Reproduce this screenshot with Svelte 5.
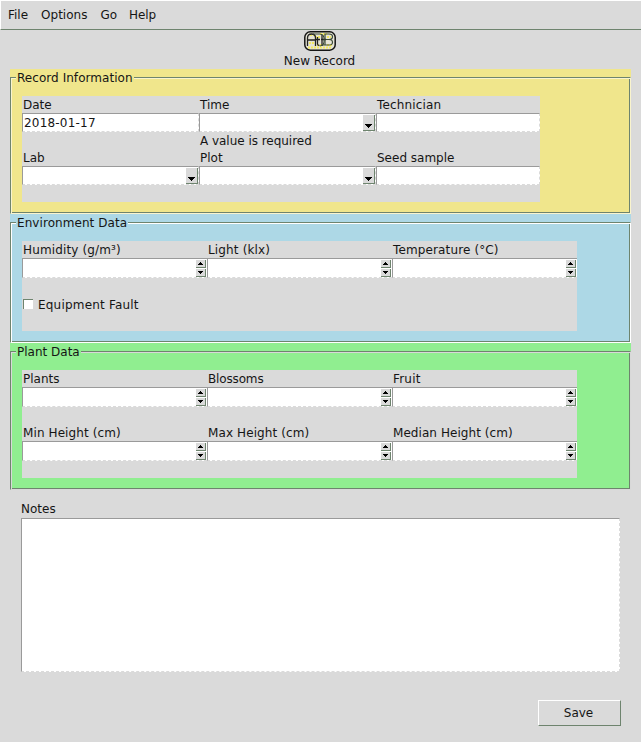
<script>
  const sections = [
    { title: 'Record Information', tone: 'yellow', track: 0.05, rows: [
      [{ label: 'Date', value: '2018-01-17' }, { label: 'Time', kind: 'combo', error: 'A value is required' }, { label: 'Technician', track: 0.15 }],
      [{ label: 'Lab', kind: 'combo' }, { label: 'Plot', kind: 'combo' }, { label: 'Seed sample' }]
    ] },
    { title: 'Environment Data', tone: 'blue', track: 0.07, rows: [
      [{ label: 'Humidity (g/m³)', kind: 'spin', track: 0.14 }, { label: 'Light (klx)', kind: 'spin', track: 0.15 }, { label: 'Temperature (°C)', kind: 'spin', track: 0.13 }]
    ], check: 'Equipment Fault' },
    { title: 'Plant Data', tone: 'green', track: 0, rows: [
      [{ label: 'Plants', kind: 'spin' }, { label: 'Blossoms', kind: 'spin', track: -0.15 }, { label: 'Fruit', kind: 'spin', track: 0.2 }],
      [{ label: 'Min Height (cm)', kind: 'spin', track: 0.1 }, { label: 'Max Height (cm)', kind: 'spin', track: 0.1 }, { label: 'Median Height (cm)', kind: 'spin', track: 0.06 }]
    ] }
  ];
</script>

<div class="window">
  <nav>
    <span>File</span><span>Options</span><span>Go</span><span class="help">Help</span>
  </nav>
  <header>
    <svg class="logo" width="34" height="22" viewBox="0 0 34 22">
      <rect x="1.8" y="1.8" width="30.4" height="18.4" rx="5.5" fill="#e6e4d6" stroke="#151515" stroke-width="1.5" />
      <path d="M5 17.5h24M7 5h6M17 4h7M6 13h6M14 15h6M24 15h5M12 7h5M24 7h4" stroke="#f5ea60" stroke-width="2" stroke-dasharray="2 1" />
      <g fill="none" stroke="#222" stroke-width="1.3">
        <path d="M4.5 16V8q0-4 4-4q4 0 4 4v8M5 10h7" />
        <path d="M14.5 7v7q0 1.5 2 1.5M12 9.5h5M19 5v11M18 9.5h5" />
      </g>
      <path d="M10 4h7q4 0 4 4v4q0 4-4 4" fill="none" stroke="#3c4a38" stroke-width="1" />
      <path d="M22 15V4h4q3.5 0 3.5 2.7t-3.5 2.8h-3h3q3.5 0 3.5 2.8t-3.5 2.7h-7" fill="none" stroke="#3c4a38" stroke-width="1.2" />
    </svg>
    <div>New Record</div>
  </header>
  <main>
    {#each sections as s}
      <section class={s.tone}>
        <div class="frame">
          <h2 style:letter-spacing="{s.track}px">{s.title}</h2>
          <div class="panel">
            {#each s.rows as row}
              <div class="row">
                {#each row as f}
                  <div class="field">
                    <div class="label" style:letter-spacing="{f.track ?? 0}px">{f.label}</div>
                    <div class="entry">
                      <span>{f.value ?? ''}</span>
                      {#if f.kind === 'combo'}
                        <i class="drop"><svg width="7" height="4"><path d="M0 0h7v1h-1v1h-1v1h-1v1h-1v-1h-1v-1h-1v-1h-1z" /></svg></i>
                      {:else if f.kind === 'spin'}
                        <div class="spin">
                          <i><svg width="5" height="3"><path d="M2 0h1v1h1v1h1v1h-5v-1h1v-1h1z" /></svg></i>
                          <i><svg width="5" height="3"><path d="M0 0h5v1h-1v1h-1v1h-1v-1h-1v-1h-1z" /></svg></i>
                        </div>
                      {/if}
                    </div>
                    <div class="error">{f.error ?? ''}</div>
                  </div>
                {/each}
              </div>
            {/each}
            {#if s.check}
              <div class="check"><b></b>{s.check}</div>
            {/if}
          </div>
        </div>
      </section>
    {/each}
  </main>
  <div class="notes">
    <div class="label">Notes</div>
    <div class="area"></div>
  </div>
  <footer><div class="save">Save</div></footer>
</div>

<style>
  .window { width: 641px; height: 742px; box-sizing: border-box; background: #dadada; color: #151515; font: 12px/18px "DejaVu Sans", sans-serif; white-space: nowrap; overflow: hidden; }
  .window :global(*) { box-sizing: border-box; }
  nav { height: 30px; border: solid #fff; border-width: 1px 0 0 1px; border-bottom: 1px solid #6e846e; padding: 5px 7px; display: flex; gap: 13px; }
  .help { margin-left: -1px; letter-spacing: -0.1px; }
  header { height: 39px; display: flex; flex-direction: column; align-items: center; padding-right: 2px; }
  .logo { display: block; flex: none; }
  section { width: 621px; margin-left: 10px; padding-top: 8px; height: 145px; }
  .blue { height: 129px; background: #add8e6; --light: #fff; --h: 20px; --col: 185px; --last: 185px; --err: 17px; --panel: 90px; }
  .green { height: 147px; background: #90ee90; --light: #d8d8d8; --h: 20px; --col: 185px; --last: 185px; --err: 17px; --panel: 108px; }
  .yellow { background: #f0e68c; --light: #f9f4ce; --h: 19px; --col: 177px; --last: 164px; --err: 17px; --panel: 106px; }
  .frame { position: relative; height: 100%; border: 1px solid #6e846e; border-right-color: var(--light); border-bottom-color: var(--light); box-shadow: inset 1px 1px var(--light), inset -1px -1px #6e846e; padding: 18px 0 0 11px; }
  h2 { position: absolute; left: 5px; top: -9px; padding: 0 1px; margin: 0; font: inherit; }
  .yellow h2 { background: #f0e68c; }
  .blue h2 { background: #add8e6; }
  .green h2 { background: #90ee90; }
  .panel { width: calc(var(--col) * 2 + var(--last)); height: var(--panel); background: #dadada; }
  .row { display: flex; }
  .field { width: var(--col); }
  .field:last-child { width: var(--last); }
  .label { height: 17px; line-height: 18px; padding-left: 1px; }
  .entry { height: var(--h); background: #fff; border: 1px solid #9a9a9a; border-right: 1px dashed #dadada; border-bottom: 1px dashed #dadada; display: flex; justify-content: space-between; padding: 1px 0 0 1px; line-height: 17px; }
  .entry span { letter-spacing: 0.2px; }
  .blue .entry, .green .entry { border-right: 0; padding-right: 1px; }
  .error { height: var(--err); line-height: 18px; padding-left: 1px; letter-spacing: -0.03px; }
  i { display: flex; background: #dadada; border: solid #6e846e; border-width: 0 1px 1px 0; justify-content: center; }
  .drop { width: 12px; height: 16px; padding-top: 9px; }
  .spin { width: 10px; display: flex; flex-direction: column; gap: 1px; }
  .spin i { width: 10px; height: 8px; padding-top: 2px; }
  .check { display: flex; align-items: center; height: 18px; margin-top: 1px; padding-left: 1px; gap: 5px; letter-spacing: 0.2px; }
  .check b { width: 10px; height: 10px; margin-bottom: 2px; background: #fff; border: solid #6e846e; border-width: 1px 0 0 1px; }
  .notes { width: 599px; margin: 10px 0 0 21px; }
  .notes .label { height: 18px; padding-left: 0; }
  .area { height: 154px; background: #fff; border: 1px solid #9a9a9a; border-right: 1px dashed #dadada; border-bottom: 1px dashed #dadada; }
  footer { display: flex; justify-content: flex-end; padding: 28px 20px 0 0; }
  .save { width: 83px; height: 26px; text-align: center; line-height: 24px; border: 1px solid #fff; border-right-color: #6e846e; border-bottom-color: #6e846e; padding-right: 2px; }
</style>
